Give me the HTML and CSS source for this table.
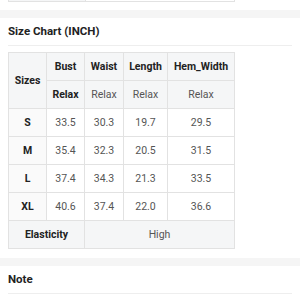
FILE: index.html
```html
<!DOCTYPE html>
<html>
<head>
<meta charset="utf-8">
<link rel="stylesheet" href="styles.css">
</head>
<body>
<div class="tail">
  <div class="tail-cell tail-left"></div>
  <div class="tail-cell tail-right"></div>
</div>
<div class="band"></div>
<section class="section">
  <h2 class="title">Size Chart (INCH)</h2>
  <table class="chart">
    <colgroup>
      <col class="c1"><col class="c2"><col class="c3"><col class="c4"><col class="c5">
    </colgroup>
    <tr>
      <th class="head" rowspan="2">Sizes</th>
      <th class="head">Bust</th>
      <th class="head">Waist</th>
      <th class="head">Length</th>
      <th class="head">Hem_Width</th>
    </tr>
    <tr>
      <th class="head">Relax</th>
      <td class="head sub">Relax</td>
      <td class="head sub">Relax</td>
      <td class="head sub">Relax</td>
    </tr>
    <tr><th class="size">S</th><td>33.5</td><td>30.3</td><td>19.7</td><td>29.5</td></tr>
    <tr><th class="size">M</th><td>35.4</td><td>32.3</td><td>20.5</td><td>31.5</td></tr>
    <tr><th class="size">L</th><td>37.4</td><td>34.3</td><td>21.3</td><td>33.5</td></tr>
    <tr><th class="size">XL</th><td>40.6</td><td>37.4</td><td>22.0</td><td>36.6</td></tr>
    <tr><th class="head" colspan="2">Elasticity</th><td class="head sub" colspan="3">High</td></tr>
  </table>
</section>
<div class="band"></div>
<section class="section">
  <h2 class="title">Note</h2>
</section>
</body>
</html>
```

FILE: styles.css
```css
html, body {
  margin: 0;
  padding: 0;
  background: #ffffff;
  font-family: Roboto, "Noto Sans", Arial, sans-serif;
  color: #222222;
}

.tail {
  display: flex;
  width: 225px;
  height: 1px;
  margin: 0 8px 8px;
  border: 1px solid #e2e2e2;
  border-top: none;
}

.tail-cell {
  height: 1px;
}

.tail-left {
  width: 76px;
  background: #f5f6f7;
  border-right: 1px solid #e2e2e2;
}

.tail-right {
  flex: 1;
}

.band {
  height: 8px;
  background: #f5f5f5;
}

.section {
  padding: 0 8px 9px;
}

.title {
  margin: 0;
  font-size: 11.5px;
  font-weight: 700;
  line-height: 27px;
  color: #222222;
  border-bottom: 1px solid #eeeeee;
}

.chart {
  margin-top: 6px;
  border-collapse: collapse;
  table-layout: fixed;
  width: 226px;
  font-size: 10.5px;
}

.c1 { width: 38px; }
.c2 { width: 38px; }
.c3 { width: 39px; }
.c4 { width: 44px; }
.c5 { width: 67px; }

.chart th,
.chart td {
  border: 1px solid #e2e2e2;
  height: 28px;
  padding: 0;
  text-align: center;
  vertical-align: middle;
  box-sizing: border-box;
  color: #555555;
  font-weight: 400;
}

.chart th {
  color: #222222;
  font-weight: 700;
}

.chart .head {
  background: #f5f6f7;
}

.chart .sub {
  color: #555555;
  font-weight: 400;
}

.chart .size {
  background: #fafafa;
}
```
